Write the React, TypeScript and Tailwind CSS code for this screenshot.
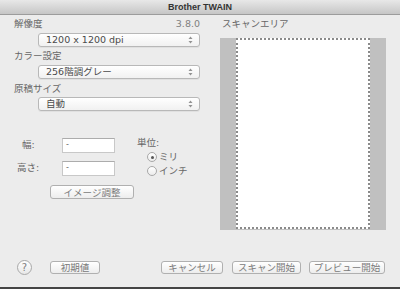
import React from "react";

const font = { fontFamily: '"DejaVu Sans", "Noto Sans CJK JP", sans-serif' };

const Arrows = () => (
  <svg width="5" height="8" viewBox="0 0 5 8">
    <path d="M2.5 0.5 L4.5 3 L0.5 3 Z" fill="#929292" />
    <path d="M2.5 7.5 L4.5 5 L0.5 5 Z" fill="#929292" />
  </svg>
);

const Select = ({ value, className }: { value: string; className: string }) => (
  <div
    className={`ml-[24px] h-[14px] w-[162px] flex items-center justify-between pl-[7px] pr-[6px] rounded-[3px] border border-[#b8b8b8] bg-linear-to-b from-white to-[#f1f1f1] text-[9.5px] text-[#4a4a4a] shadow-[0_1px_0_rgba(0,0,0,0.05)] ${className}`}
  >
    <span className="leading-[12px]">{value}</span>
    <Arrows />
  </div>
);

const Button = ({ label, className }: { label: string; className: string }) => (
  <div
    className={`h-[13px] flex items-center justify-center rounded-[3px] border border-[#b0b0b0] bg-linear-to-b from-white to-[#ededed] text-[9.5px] text-[#7a7a7a] leading-[11px] ${className}`}
  >
    {label}
  </div>
);

const Radio = ({ checked, label }: { checked?: boolean; label: string }) => (
  <div className="flex items-center h-[12px] mt-[2px] ml-[10px]">
    <div className="w-[10px] h-[10px] rounded-full border border-[#a8a8a8] bg-linear-to-b from-white to-[#ececec] flex items-center justify-center">
      {checked && <div className="w-[3px] h-[3px] rounded-full bg-[#555]" />}
    </div>
    <span className="ml-[2px] text-[9.5px] text-[#666] leading-[12px]">{label}</span>
  </div>
);

export default function App() {
  return (
    <div className="w-[400px] h-[289px] flex flex-col bg-[#ececec] overflow-hidden" style={font}>
      <div className="h-[15px] shrink-0 border-b border-[#9c9c9c] bg-linear-to-b from-[#e8e8e8] to-[#c6c6c6] flex items-center justify-center">
        <span className="text-[9px] font-bold text-[#333] leading-[14px]" style={{ fontFamily: '"Liberation Sans", sans-serif' }}>
          Brother TWAIN
        </span>
      </div>

      <div className="h-[240px] shrink-0 flex">
        <div className="w-[220px] pl-[14px] pr-[20px] pt-[3px]">
          <div className="h-[12px] flex justify-between items-center text-[9.5px] leading-[12px]">
            <span className="text-[#666]">解像度</span>
            <span className="text-[#808080]">3.8.0</span>
          </div>
          <Select value="1200 x 1200 dpi" className="mt-[3px]" />
          <div className="h-[12px] mt-[3px] text-[9.5px] leading-[12px] text-[#666]">カラー設定</div>
          <Select value="256階調グレー" className="mt-[3px]" />
          <div className="h-[12px] mt-[4px] text-[9.5px] leading-[12px] text-[#666]">原稿サイズ</div>
          <Select value="自動" className="mt-[2px]" />

          <div className="mt-[26px] flex">
            <div className="grid grid-cols-[48px_53px] gap-y-[6px] items-center text-[9.5px] text-[#666]">
              <span className="pl-[8px]">幅:</span>
              <div className="h-[15px] bg-white border border-[#c8c8c8] border-t-[#acacac] pl-[3px] text-[8px] leading-[11px] text-[#666]">-</div>
              <span className="pl-[3px]">高さ:</span>
              <div className="h-[15px] bg-white border border-[#c8c8c8] border-t-[#acacac] pl-[3px] text-[8px] leading-[11px] text-[#666]">-</div>
            </div>
            <div className="ml-[22px]">
              <div className="h-[12px] text-[9.5px] leading-[12px] text-[#666]">単位:</div>
              <Radio checked label="ミリ" />
              <Radio label="インチ" />
            </div>
          </div>

          <Button label="イメージ調整" className="mt-[8px] ml-[36px] w-[84px] h-[14px]" />
        </div>

        <div className="pt-[3px]">
          <div className="h-[12px] pl-[2px] text-[9.5px] leading-[12px] text-[#666]">スキャンエリア</div>
          <div className="mt-[8px] w-[166px] h-[192px] bg-[#c0c0c0] flex justify-center">
            <div className="ml-[-1px] w-[134px] h-[191px] bg-white border-2 border-dotted border-[#8a8a8a]" />
          </div>
        </div>
      </div>

      <div className="h-[32px] shrink-0 flex items-start pt-[6px] pl-[17px]">
        <div className="w-[15px] h-[15px] -mt-[1px] rounded-full border border-[#a8a8a8] bg-linear-to-b from-white to-[#e8e8e8] flex items-center justify-center text-[10px] leading-[10px] text-[#808080]">
          ?
        </div>
        <Button label="初期値" className="ml-[18px] w-[50px]" />
        <Button label="キャンセル" className="ml-[61px] w-[62px]" />
        <Button label="スキャン開始" className="ml-[9px] w-[69px]" />
        <Button label="プレビュー開始" className="ml-[8px] w-[76px]" />
      </div>

      <div className="h-[2px] shrink-0 bg-[#454545]" />
    </div>
  );
}
